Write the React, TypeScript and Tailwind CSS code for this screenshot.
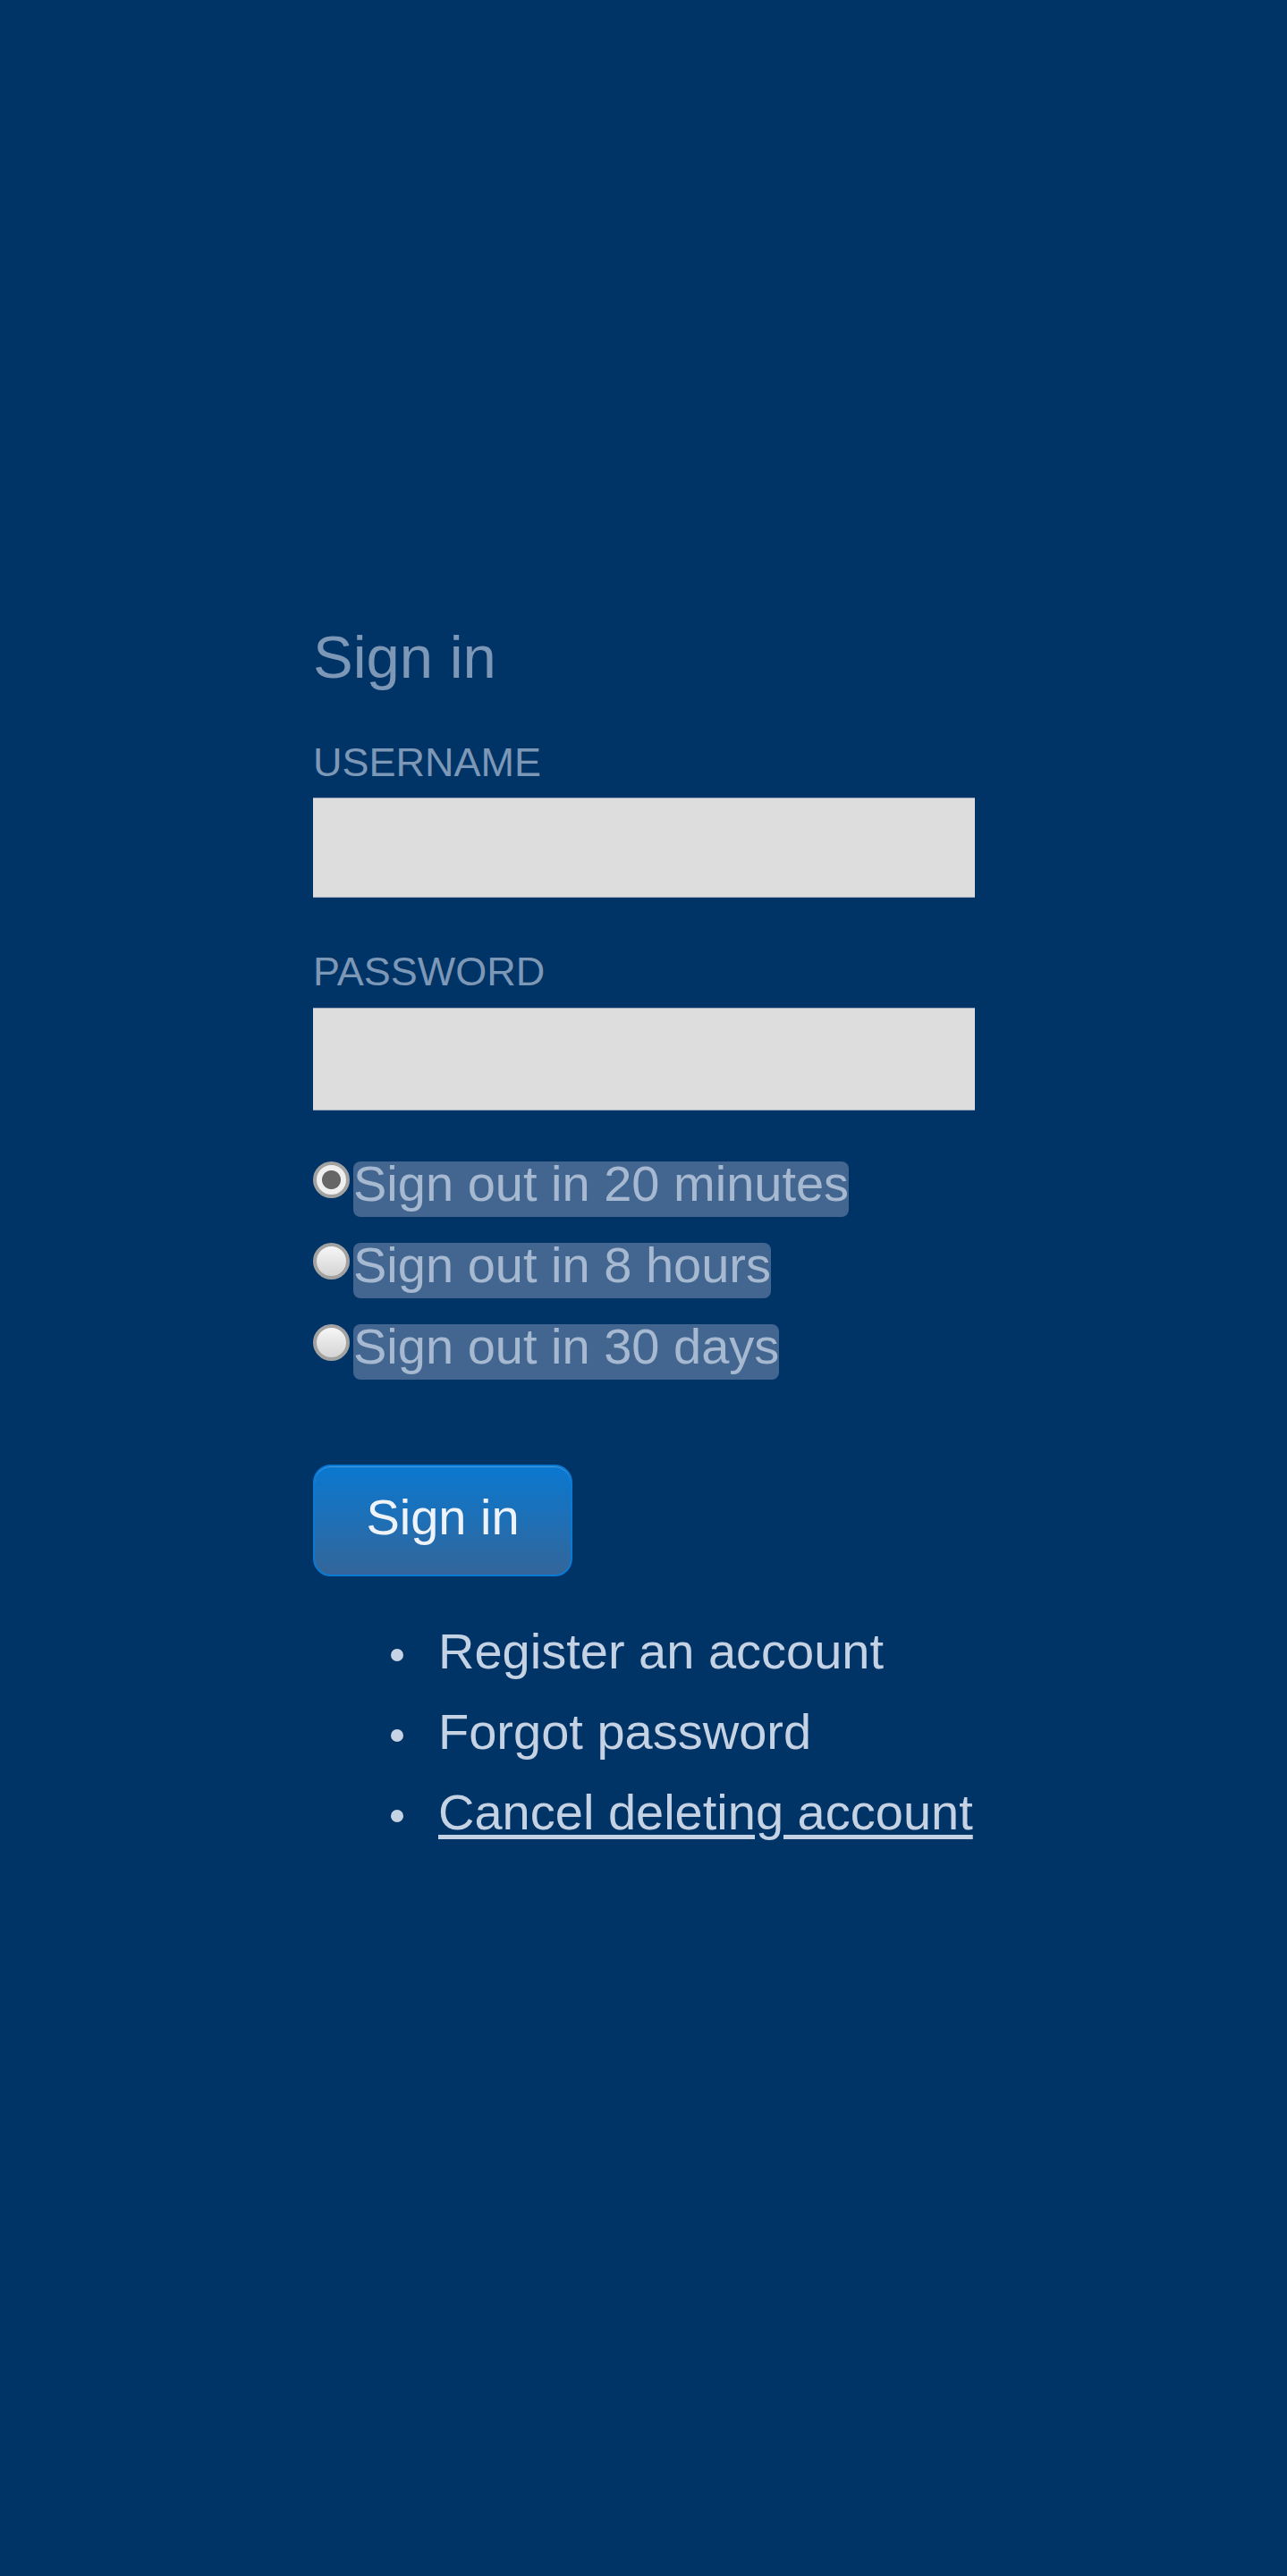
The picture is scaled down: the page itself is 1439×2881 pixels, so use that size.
import { useState } from "react";

const durations = [
  { id: "20m", label: "Sign out in 20 minutes" },
  { id: "8h", label: "Sign out in 8 hours" },
  { id: "30d", label: "Sign out in 30 days" },
];

const links = [
  { text: "Register an account", underline: false },
  { text: "Forgot password", underline: false },
  { text: "Cancel deleting account", underline: true },
];

export default function App() {
  const [duration, setDuration] = useState("20m");

  return (
    <div className="min-h-screen bg-[#003366] font-['Liberation_Sans',Arial,sans-serif]">
      <form className="w-[740px] ml-[350px] pt-[697px] flex flex-col">
        <h2 className="text-[67px] leading-[76px] font-normal text-[#7d97b6]">
          Sign in
        </h2>

        <label className="mt-[54px] text-[45px] leading-[52px] text-[#7d97b6]">
          USERNAME
        </label>
        <input
          type="text"
          className="mt-[13px] h-[112px] w-full bg-[#dddddd] border-y border-[#97a6ba] outline-none"
        />

        <label className="mt-[57px] text-[45px] leading-[52px] text-[#7d97b6]">
          PASSWORD
        </label>
        <input
          type="password"
          className="mt-[14px] h-[115px] w-full bg-[#dddddd] border-y border-[#97a6ba] outline-none"
        />

        <div className="mt-[57px] flex flex-col gap-[29px]">
          {durations.map((d) => (
            <label key={d.id} className="flex items-start gap-[4px] h-[62px]">
              <input
                type="radio"
                name="duration"
                checked={duration === d.id}
                onChange={() => setDuration(d.id)}
                className="appearance-none shrink-0 w-[41px] h-[41px] rounded-full border-[4px] border-[#a2a2a2] bg-[linear-gradient(#f6f6f6,#d4d4d4)] checked:bg-[radial-gradient(circle,#666666_0_10px,#efefef_11px)]"
              />
              <span className="inline-block h-[62px] rounded-[8px] bg-[#426690] text-[56px] leading-[50px] text-[#a6b9d0] whitespace-nowrap">
                {d.label}
              </span>
            </label>
          ))}
        </div>

        <button
          type="button"
          className="mt-[95px] w-[290px] h-[125px] pb-[8px] rounded-[20px] border-2 border-[#0a7ad4] bg-[linear-gradient(#0a78d0,#33669a)] shadow-[inset_0_1px_0_#4b9be0] text-[56px] text-[#eef3fa]"
        >
          Sign in
        </button>

        <ul className="mt-[39px] flex flex-col">
          {links.map((l) => (
            <li key={l.text} className="flex items-start h-[90px]">
              <span className="mt-[42px] ml-[87px] w-[14px] h-[14px] rounded-full bg-[#c6d3e4] shrink-0" />
              <a
                href="#"
                className={`ml-[39px] text-[56px] leading-[90px] text-[#c4d2e3] whitespace-nowrap ${
                  l.underline ? "underline underline-offset-[6px]" : "no-underline"
                }`}
              >
                {l.text}
              </a>
            </li>
          ))}
        </ul>
      </form>
    </div>
  );
}
